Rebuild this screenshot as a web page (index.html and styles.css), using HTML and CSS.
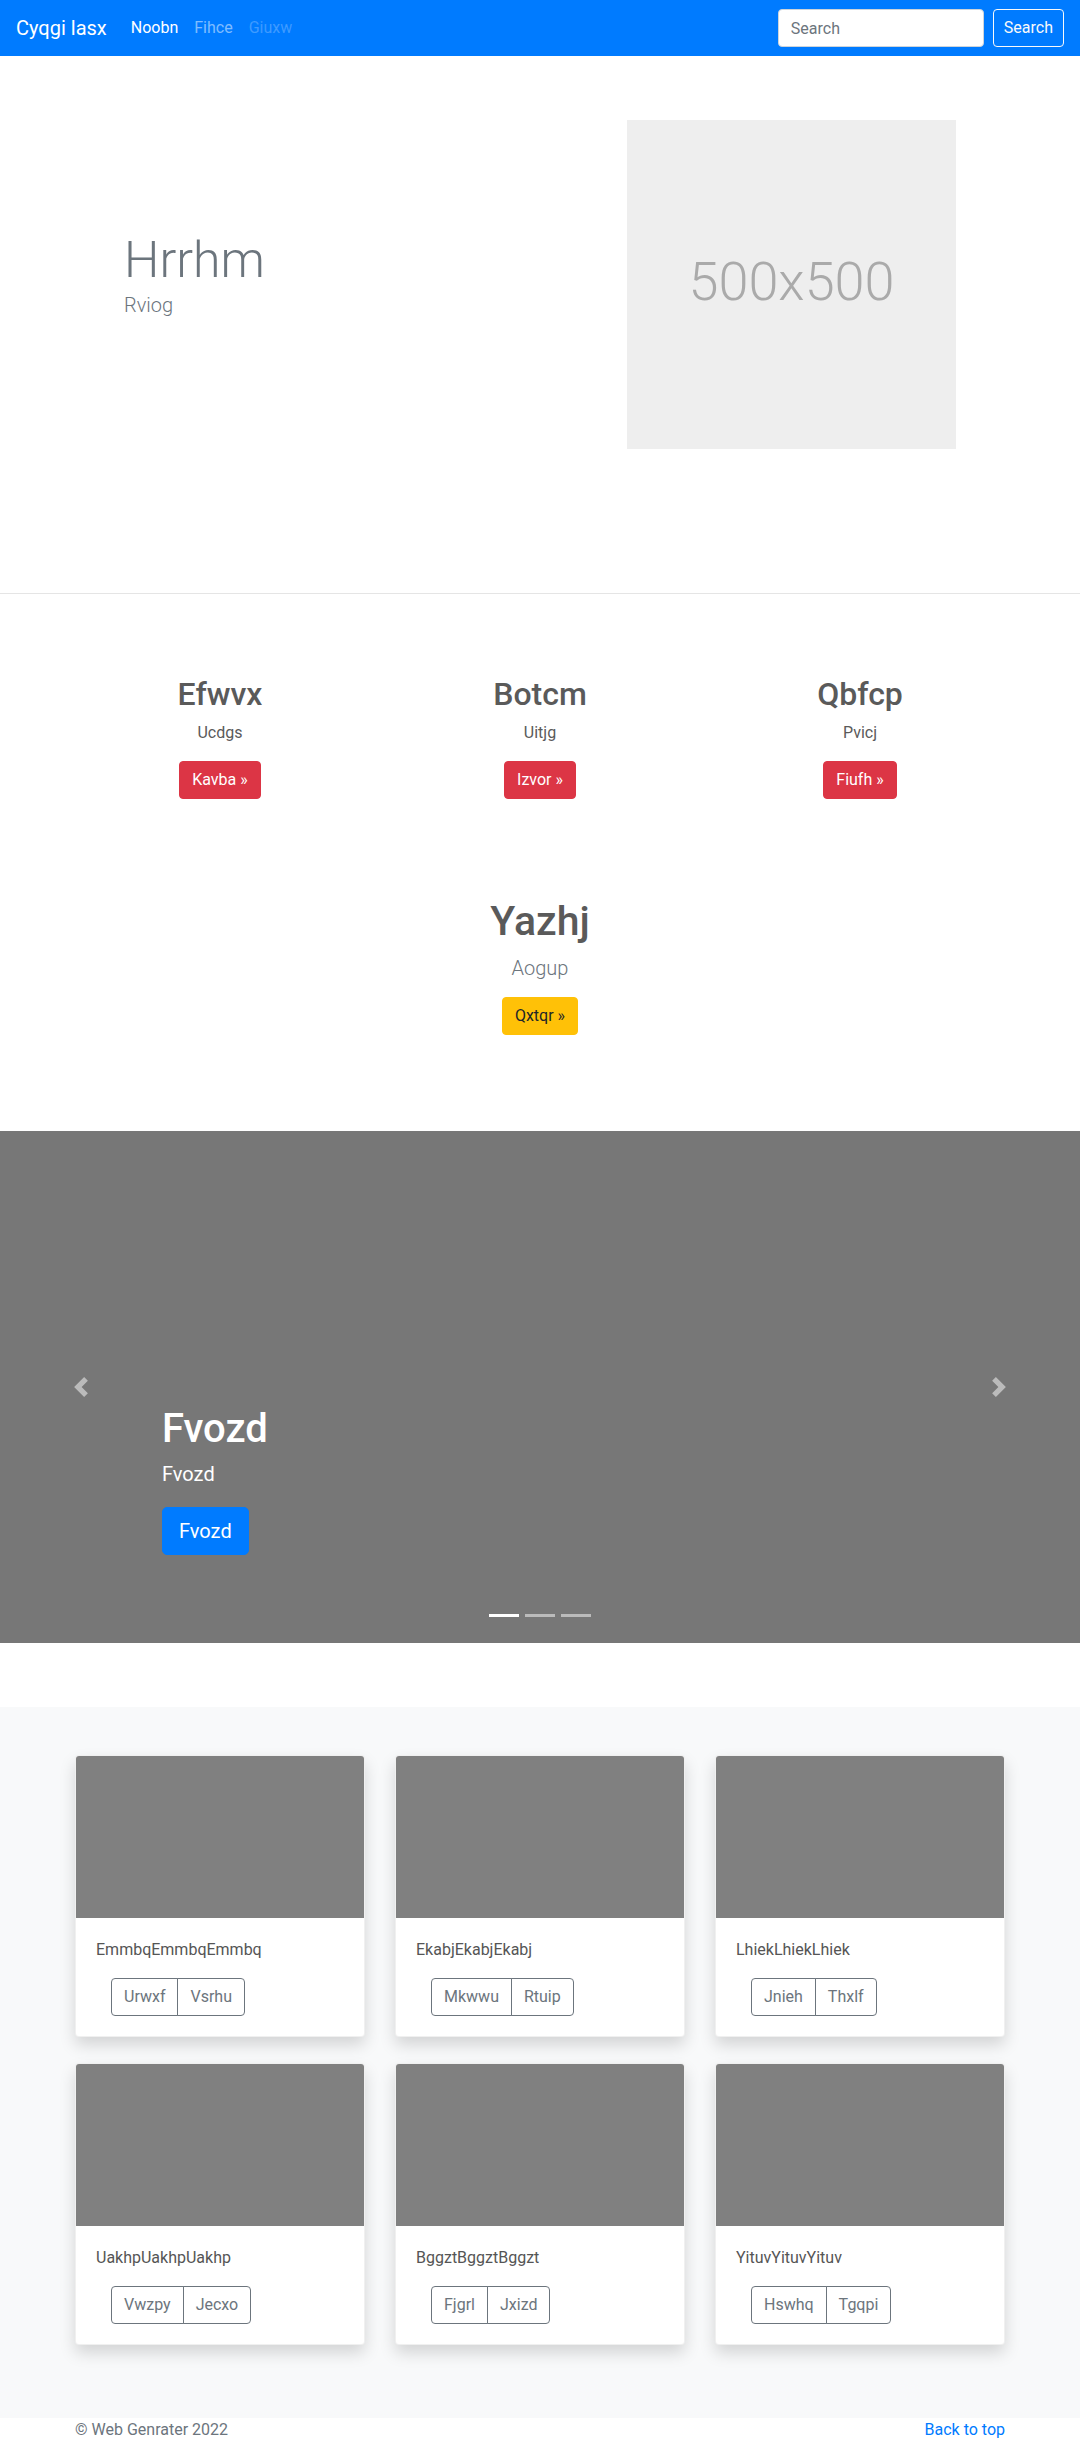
FILE: index.html
```html
<!DOCTYPE html>
<html lang="en">
<head>
<meta charset="utf-8">
<title>Cyqgi lasx</title>
<link rel="stylesheet" href="styles.css">
</head>
<body>
<nav class="navbar">
  <a class="brand" href="#">Cyqgi lasx</a>
  <ul class="nav-links">
    <li><a class="nav-link active" href="#">Noobn</a></li>
    <li><a class="nav-link" href="#">Fihce</a></li>
    <li><a class="nav-link disabled" href="#">Giuxw</a></li>
  </ul>
  <form class="search">
    <input class="search-input" type="text" placeholder="Search">
    <button class="search-btn" type="button">Search</button>
  </form>
</nav>

<section class="hero">
  <div class="hero-text">
    <h1 class="hero-title">Hrrhm</h1>
    <p class="hero-lead">Rviog</p>
  </div>
  <div class="hero-img"><span>500x500</span></div>
</section>

<section class="features">
  <div class="feature-row">
    <div class="feature">
      <h2 class="feature-title">Efwvx</h2>
      <p class="feature-text">Ucdgs</p>
      <a class="btn btn-danger" href="#">Kavba »</a>
    </div>
    <div class="feature">
      <h2 class="feature-title">Botcm</h2>
      <p class="feature-text">Uitjg</p>
      <a class="btn btn-danger" href="#">Izvor »</a>
    </div>
    <div class="feature">
      <h2 class="feature-title">Qbfcp</h2>
      <p class="feature-text">Pvicj</p>
      <a class="btn btn-danger" href="#">Fiufh »</a>
    </div>
  </div>
  <div class="feature feature-big">
    <h2 class="big-title">Yazhj</h2>
    <p class="big-lead">Aogup</p>
    <a class="btn btn-warning" href="#">Qxtqr »</a>
  </div>
</section>

<section class="carousel">
  <div class="caption">
    <h1 class="caption-title">Fvozd</h1>
    <p class="caption-text">Fvozd</p>
    <a class="btn btn-lg btn-primary" href="#">Fvozd</a>
  </div>
  <a class="control control-prev" href="#">
    <svg width="20" height="20" viewBox="0 0 8 8" fill="#fff"><path d="M5.25 0l-4 4 4 4 1.5-1.5L4.25 4l2.5-2.5L5.25 0z"/></svg>
  </a>
  <a class="control control-next" href="#">
    <svg width="20" height="20" viewBox="0 0 8 8" fill="#fff"><path d="M2.75 0l-1.5 1.5L3.75 4l-2.5 2.5L2.75 8l4-4-4-4z"/></svg>
  </a>
  <ol class="indicators">
    <li class="ind active"></li>
    <li class="ind"></li>
    <li class="ind"></li>
  </ol>
</section>

<section class="album">
  <div class="grid">
    <div class="card">
      <div class="card-img"></div>
      <div class="card-body">
        <p class="card-text">EmmbqEmmbqEmmbq</p>
        <div class="btn-group"><button class="gbtn">Urwxf</button><button class="gbtn">Vsrhu</button></div>
      </div>
    </div>
    <div class="card">
      <div class="card-img"></div>
      <div class="card-body">
        <p class="card-text">EkabjEkabjEkabj</p>
        <div class="btn-group"><button class="gbtn">Mkwwu</button><button class="gbtn">Rtuip</button></div>
      </div>
    </div>
    <div class="card">
      <div class="card-img"></div>
      <div class="card-body">
        <p class="card-text">LhiekLhiekLhiek</p>
        <div class="btn-group"><button class="gbtn">Jnieh</button><button class="gbtn">Thxlf</button></div>
      </div>
    </div>
    <div class="card">
      <div class="card-img"></div>
      <div class="card-body">
        <p class="card-text">UakhpUakhpUakhp</p>
        <div class="btn-group"><button class="gbtn">Vwzpy</button><button class="gbtn">Jecxo</button></div>
      </div>
    </div>
    <div class="card">
      <div class="card-img"></div>
      <div class="card-body">
        <p class="card-text">BggztBggztBggzt</p>
        <div class="btn-group"><button class="gbtn">Fjgrl</button><button class="gbtn">Jxizd</button></div>
      </div>
    </div>
    <div class="card">
      <div class="card-img"></div>
      <div class="card-body">
        <p class="card-text">YituvYituvYituv</p>
        <div class="btn-group"><button class="gbtn">Hswhq</button><button class="gbtn">Tgqpi</button></div>
      </div>
    </div>
  </div>
</section>

<footer class="footer">
  <p class="copy">© Web Genrater 2022</p>
  <a class="to-top" href="#">Back to top</a>
</footer>
</body>
</html>
```

FILE: styles.css
```css
* { box-sizing: border-box; }
html, body { margin: 0; padding: 0; }
body {
  font-family: Roboto, "Noto Sans", "Liberation Sans", sans-serif;
  font-size: 16px;
  line-height: 1.5;
  color: #5a5a5a;
  background: #fff;
}
a { text-decoration: none; }
p, h1, h2, ul, ol { margin: 0; padding: 0; }

/* navbar */
.navbar {
  height: 56px;
  background: #007bff;
  display: flex;
  align-items: center;
  padding: 0 16px;
}
.brand {
  color: #fff;
  font-size: 20px;
  line-height: 30px;
  margin-right: 16px;
}
.nav-links {
  list-style: none;
  display: flex;
  flex: 1;
}
.nav-link {
  display: block;
  padding: 8px 8px;
  color: rgba(255,255,255,.5);
  font-size: 16px;
}
.nav-link.active { color: #fff; }
.nav-link.disabled { color: rgba(255,255,255,.25); }
.search { display: flex; align-items: center; }
.search-input {
  width: 206px;
  height: 38px;
  margin-right: 9px;
  padding: 6px 12px;
  font: inherit;
  font-size: 16px;
  color: #495057;
  background: #fff;
  border: 1px solid #ced4da;
  border-radius: 4px;
}
.search-input::placeholder { color: #6c757d; }
.search-btn {
  height: 38px;
  padding: 6px 10px;
  font: inherit;
  font-size: 16px;
  color: #f8f9fa;
  background: transparent;
  border: 1px solid #f8f9fa;
  border-radius: 4px;
}

/* hero */
.hero {
  display: flex;
  align-items: flex-start;
  padding: 64px 0 144px 124px;
  border-bottom: 1px solid #e5e5e5;
}
.hero-text {
  flex: 0 0 503px;
  padding-top: 110px;
}
.hero-title {
  font-size: 50px;
  font-weight: 300;
  line-height: 60px;
  color: #6c757d;
}
.hero-lead {
  font-size: 20px;
  font-weight: 300;
  line-height: 30px;
  color: #6c757d;
}
.hero-img {
  width: 329px;
  height: 329px;
  background: #eee;
  display: flex;
  align-items: center;
  justify-content: center;
}
.hero-img span {
  font-size: 54px;
  font-weight: 300;
  color: #aaa;
  margin-top: -6px;
}

/* features */
.features {
  padding-top: 81px;
  padding-bottom: 96px;
}
.feature-row {
  width: 960px;
  margin: 0 auto;
  display: grid;
  grid-template-columns: repeat(3, 1fr);
}
.feature {
  display: flex;
  flex-direction: column;
  align-items: center;
  text-align: center;
}
.feature-title {
  font-size: 32px;
  font-weight: 500;
  line-height: 1.2;
  color: #5a5a5a;
  margin-bottom: 8px;
}
.feature-text {
  margin-bottom: 16px;
  color: #5a5a5a;
}
.feature-big { margin-top: 97px; }
.big-title {
  font-size: 41px;
  font-weight: 500;
  line-height: 50px;
  color: #5a5a5a;
  margin-bottom: 7px;
}
.big-lead {
  font-size: 20px;
  font-weight: 300;
  line-height: 30px;
  color: #6c757d;
  margin-bottom: 14px;
}

.btn {
  display: inline-block;
  padding: 6px 12px;
  font-size: 16px;
  line-height: 24px;
  border: 1px solid transparent;
  border-radius: 4px;
}
.btn-danger { background: #dc3545; border-color: #dc3545; color: #fff; }
.btn-warning { background: #ffc107; border-color: #ffc107; color: #212529; }
.btn-primary { background: #007bff; border-color: #007bff; color: #fff; }
.btn-lg { padding: 8px 16px; font-size: 20px; line-height: 30px; border-radius: 5px; }

/* carousel */
.carousel {
  position: relative;
  height: 512px;
  background: #777;
  overflow: hidden;
}
.caption {
  position: absolute;
  left: 15%;
  right: 15%;
  top: 274px;
  color: #fff;
  display: flex;
  flex-direction: column;
  align-items: flex-start;
}
.caption-title {
  font-size: 40px;
  font-weight: 500;
  line-height: 48px;
  margin-bottom: 6px;
}
.caption-text {
  font-size: 20px;
  line-height: 30px;
  margin-bottom: 18px;
}
.control {
  position: absolute;
  top: 0;
  bottom: 0;
  width: 15%;
  display: flex;
  align-items: center;
  justify-content: center;
  opacity: .5;
}
.control-prev { left: 0; }
.control-next { right: 0; }
.indicators {
  position: absolute;
  left: 0;
  right: 0;
  bottom: 26px;
  list-style: none;
  display: flex;
  justify-content: center;
  gap: 6px;
}
.ind {
  width: 30px;
  height: 3px;
  background: #fff;
  opacity: .5;
}
.ind.active { opacity: 1; }

/* album */
.album {
  margin-top: 64px;
  background: #f8f9fa;
  padding: 48px 0 48px;
}
.grid {
  width: 930px;
  margin: 0 auto;
  display: grid;
  grid-template-columns: repeat(3, 1fr);
  column-gap: 30px;
  row-gap: 26px;
  padding-bottom: 25px;
}
.card {
  background: #fff;
  border: 1px solid rgba(0,0,0,.06);
  border-radius: 4px;
  box-shadow: 0 8px 16px rgba(0,0,0,.15);
  overflow: hidden;
}
.card-img {
  height: 162px;
  background: #808080;
}
.card-body { padding: 20px; }
.card-text {
  color: #555;
  margin-bottom: 16px;
}
.btn-group {
  display: inline-flex;
  margin-left: 15px;
}
.gbtn {
  font: inherit;
  font-size: 16px;
  line-height: 24px;
  padding: 6px 12px;
  color: #6c757d;
  background: transparent;
  border: 1px solid #6c757d;
}
.gbtn:first-child { border-radius: 4px 0 0 4px; }
.gbtn:last-child { border-radius: 0 4px 4px 0; margin-left: -1px; }

/* footer */
.footer {
  width: 930px;
  margin: 0 auto;
  display: flex;
  justify-content: space-between;
  padding-bottom: 48px;
}
.copy { color: #6c757d; }
.to-top { color: #007bff; }
```
